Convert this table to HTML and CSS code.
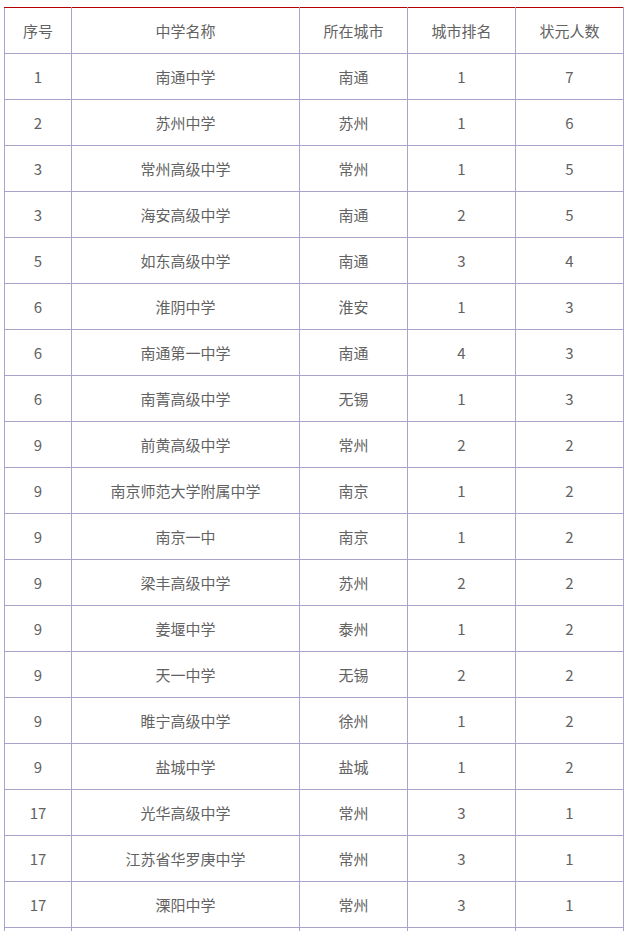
FILE: index.html
```html
<!DOCTYPE html>
<html lang="zh">
<head>
<meta charset="utf-8">
<link rel="stylesheet" href="styles.css">
</head>
<body>
<div class="page">
<table class="rank">
<colgroup><col class="c1"><col class="c2"><col class="c3"><col class="c4"><col class="c5"></colgroup>
<thead>
<tr><th>序号</th><th>中学名称</th><th>所在城市</th><th>城市排名</th><th>状元人数</th></tr>
</thead>
<tbody>
<tr><td>1</td><td>南通中学</td><td>南通</td><td>1</td><td>7</td></tr>
<tr><td>2</td><td>苏州中学</td><td>苏州</td><td>1</td><td>6</td></tr>
<tr><td>3</td><td>常州高级中学</td><td>常州</td><td>1</td><td>5</td></tr>
<tr><td>3</td><td>海安高级中学</td><td>南通</td><td>2</td><td>5</td></tr>
<tr><td>5</td><td>如东高级中学</td><td>南通</td><td>3</td><td>4</td></tr>
<tr><td>6</td><td>淮阴中学</td><td>淮安</td><td>1</td><td>3</td></tr>
<tr><td>6</td><td>南通第一中学</td><td>南通</td><td>4</td><td>3</td></tr>
<tr><td>6</td><td>南菁高级中学</td><td>无锡</td><td>1</td><td>3</td></tr>
<tr><td>9</td><td>前黄高级中学</td><td>常州</td><td>2</td><td>2</td></tr>
<tr><td>9</td><td>南京师范大学附属中学</td><td>南京</td><td>1</td><td>2</td></tr>
<tr><td>9</td><td>南京一中</td><td>南京</td><td>1</td><td>2</td></tr>
<tr><td>9</td><td>梁丰高级中学</td><td>苏州</td><td>2</td><td>2</td></tr>
<tr><td>9</td><td>姜堰中学</td><td>泰州</td><td>1</td><td>2</td></tr>
<tr><td>9</td><td>天一中学</td><td>无锡</td><td>2</td><td>2</td></tr>
<tr><td>9</td><td>睢宁高级中学</td><td>徐州</td><td>1</td><td>2</td></tr>
<tr><td>9</td><td>盐城中学</td><td>盐城</td><td>1</td><td>2</td></tr>
<tr><td>17</td><td>光华高级中学</td><td>常州</td><td>3</td><td>1</td></tr>
<tr><td>17</td><td>江苏省华罗庚中学</td><td>常州</td><td>3</td><td>1</td></tr>
<tr><td>17</td><td>溧阳中学</td><td>常州</td><td>3</td><td>1</td></tr>
<tr class="cut"><td></td><td></td><td></td><td></td><td></td></tr>
</tbody>
</table>
</div>
</body>
</html>
```

FILE: styles.css
```css
html, body {
  margin: 0;
  padding: 0;
  background: #ffffff;
}
.page {
  padding: 7px 0 0 4px;
}
.rank {
  border-collapse: collapse;
  table-layout: fixed;
  width: 620px;
  font-family: "Noto Sans CJK SC", "Microsoft YaHei", sans-serif;
  font-size: 15px;
  color: #626262;
}
.rank th, .rank td {
  border: 1px solid #aaa3cb;
  height: 45px;
  padding: 0;
  text-align: center;
  vertical-align: middle;
  font-weight: normal;
  line-height: 20px;
}
.rank thead th {
  border-top: 1px solid #b40000;
}
.c1 { width: 67px; }
.c2 { width: 228px; }
.c3 { width: 108px; }
.c4 { width: 108px; }
.c5 { width: 108px; }
```
